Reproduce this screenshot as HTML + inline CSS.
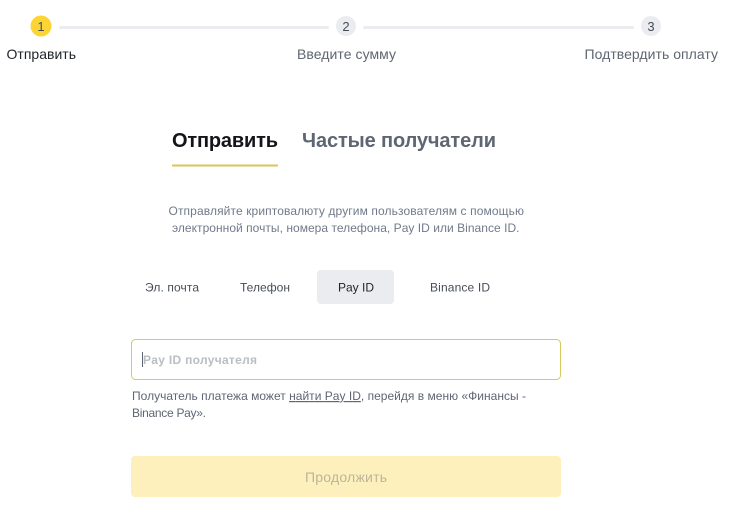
<!DOCTYPE html>
<html lang="ru"><head><meta charset="utf-8"><title>Отправить</title>
<style>
html,body{margin:0;padding:0;background:#fff;width:736px;height:515px;overflow:hidden}
svg{display:block;filter:blur(.25px)}
text{font-family:"Liberation Sans",sans-serif}
</style></head><body>
<svg width="736" height="515" viewBox="0 0 736 515" xmlns="http://www.w3.org/2000/svg">
<rect width="736" height="515" fill="#fff"/>
<circle cx="41" cy="26" r="10.5" fill="#fcd535"/>
<circle cx="346" cy="26" r="10" fill="#eaecef"/>
<circle cx="651" cy="26" r="10" fill="#eaecef"/>
<rect x="59" y="26" width="270" height="3" rx="1.5" fill="#eaecef"/>
<rect x="363" y="26" width="271" height="3" rx="1.5" fill="#eaecef"/>
<text x="41" y="31" font-size="13" text-anchor="middle" fill="#474d57">1</text>
<text x="346" y="31" font-size="13" text-anchor="middle" fill="#474d57">2</text>
<text x="651" y="31" font-size="13" text-anchor="middle" fill="#474d57">3</text>
<text x="6.5" y="59" font-size="14" fill="#1e2329" textLength="69.5">Отправить</text>
<text x="297" y="59" font-size="14" fill="#5e6673" textLength="99">Введите сумму</text>
<text x="584.5" y="59" font-size="14" fill="#5e6673" textLength="133.5">Подтвердить оплату</text>
<text x="172" y="147" font-size="20" font-weight="700" fill="#14151a" textLength="106">Отправить</text>
<text x="302" y="147" font-size="20" font-weight="700" fill="#5e6673" textLength="194">Частые получатели</text>
<rect x="172" y="164.5" width="106" height="2" fill="#dcc552"/>
<text x="168.5" y="215" font-size="12" fill="#707a8a" textLength="355.5">Отправляйте криптовалюту другим пользователям с помощью</text>
<text x="172" y="232" font-size="12" fill="#707a8a" textLength="347.5">электронной почты, номера телефона, Pay ID или Binance ID.</text>
<rect x="317" y="270" width="77" height="34" rx="4" fill="#eaecef"/>
<text x="145" y="291.5" font-size="12" fill="#474d57" textLength="54">Эл. почта</text>
<text x="240" y="291.5" font-size="12" fill="#474d57" textLength="50">Телефон</text>
<text x="338" y="291.5" font-size="12" fill="#1e2329" textLength="36">Pay ID</text>
<text x="430" y="291.5" font-size="12" fill="#474d57" textLength="60">Binance ID</text>
<rect x="131.5" y="339.5" width="429" height="40" rx="4" fill="#fff" stroke="#d9c85f"/>
<rect x="142" y="352" width="1" height="15" fill="#5e6673"/>
<text x="143" y="364" font-size="12" font-weight="700" fill="#b9bdc4" textLength="114">Pay ID получателя</text>
<text x="132" y="400" font-size="12" fill="#5e6673" textLength="394">Получатель платежа может <tspan text-decoration="underline" fill="#5e6673">найти Pay ID</tspan>, перейдя в меню «Финансы -</text>
<text x="132" y="417" font-size="12" fill="#5e6673" textLength="74">Binance Pay».</text>
<rect x="131" y="456" width="430" height="41" rx="4" fill="#fdf0bd"/>
<text x="305" y="482" font-size="14" fill="#bcb698" textLength="82">Продолжить</text>
</svg>
</body></html>
